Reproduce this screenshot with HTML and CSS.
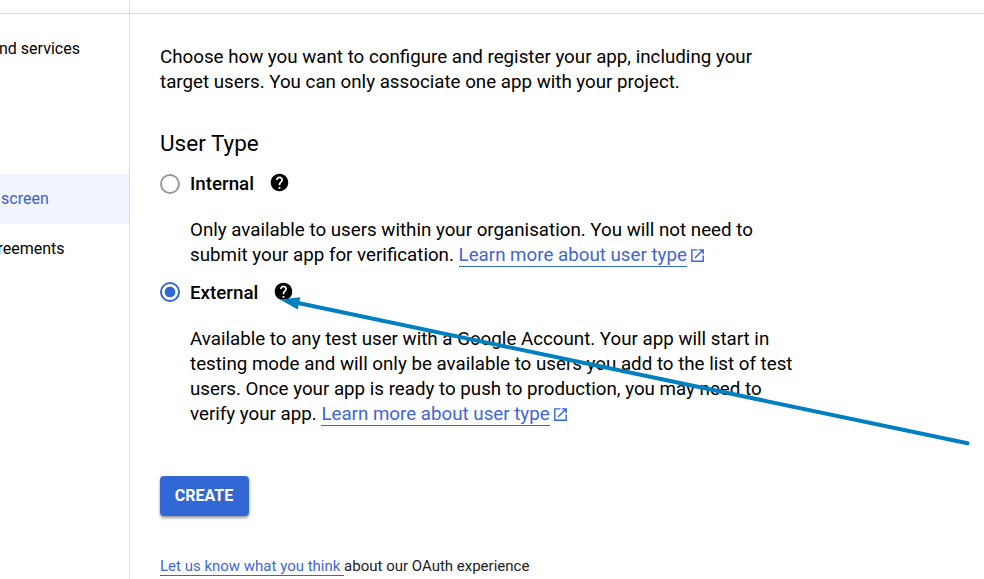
FILE: index.html
```html
<!DOCTYPE html>
<html lang="en">
<head>
<meta charset="utf-8">
<title>OAuth consent screen</title>
<link rel="stylesheet" href="styles.css">
</head>
<body>
<div class="topbar"></div>
<div class="layout">
  <nav class="sidebar">
    <div class="item"><span class="services">nd services</span></div>
    <div class="item active"><span class="screen">screen</span></div>
    <div class="item"><span class="agreements">reements</span></div>
  </nav>
  <main class="content">
    <p class="intro">Choose how you want to configure and register your app, including your<br>target users. You can only associate one app with your project.</p>
    <h2>User Type</h2>
    <div class="option"><span class="radio"></span><b>Internal</b>
      <svg class="help" viewBox="0 0 24 24"><path d="M12 2C6.480 2 2 6.480 2 12s4.480 10 10 10 10-4.480 10-10S17.520 2 12 2zm1 17h-2v-2h2v2zm2.070-7.750l-.9.920C13.450 12.900 13 13.500 13 15h-2v-.5c0-1.100.45-2.100 1.170-2.830l1.240-1.260c.37-.36.59-.86.59-1.410 0-1.100-.9-2-2-2s-2 .9-2 2H8c0-2.210 1.790-4 4-4s4 1.790 4 4c0 .88-.36 1.680-.93 2.250z"/></svg></div>
    <p class="desc first">Only available to users within your organisation. You will not need to<br>submit your app for verification. <a>Learn more about user type</a><svg class="ext" viewBox="0 0 24 24"><path d="M19 19H5V5h7V3H3v18h18v-9h-2zM14 3v2h3.590l-9.830 9.830 1.410 1.410L19 6.410V10h2V3z"/></svg></p>
    <div class="option external"><span class="radio on"></span><b>External</b>
      <svg class="help" viewBox="0 0 24 24"><path d="M12 2C6.480 2 2 6.480 2 12s4.480 10 10 10 10-4.480 10-10S17.520 2 12 2zm1 17h-2v-2h2v2zm2.070-7.750l-.9.920C13.450 12.900 13 13.500 13 15h-2v-.5c0-1.100.45-2.100 1.170-2.830l1.240-1.260c.37-.36.59-.86.59-1.410 0-1.100-.9-2-2-2s-2 .9-2 2H8c0-2.210 1.790-4 4-4s4 1.790 4 4c0 .88-.36 1.680-.93 2.250z"/></svg></div>
    <p class="desc second">Available to any test user with a Google Account. Your app will start in<br>testing mode and will only be available to users you add to the list of test<br>users. Once your app is ready to push to production, you may need to<br>verify your app. <a>Learn more about user type</a><svg class="ext" viewBox="0 0 24 24"><path d="M19 19H5V5h7V3H3v18h18v-9h-2zM14 3v2h3.590l-9.830 9.830 1.410 1.410L19 6.410V10h2V3z"/></svg></p>
    <button>CREATE</button>
    <p class="feedback"><a>Let us know what you think </a><span>about our OAuth experience</span></p>
  </main>
</div>
<svg class="arrow" viewBox="0 0 984 579"><path class="shaft" d="M297 302.800L967.500 443.300"/><path class="head" d="M280 299.500L300.300 297.300L297.700 309.500Z"/></svg>
</body>
</html>
```
FILE: styles.css
```css
* { box-sizing: border-box; }
body { margin: 0; width: 984px; height: 579px; overflow: hidden; position: relative; background: #fff; color: #000; font-family: Roboto, sans-serif; }
p, h2 { margin: 0; }
.topbar { height: 14px; border-bottom: 1px solid #dcdcdc; }
.topbar::after { content: ""; display: block; width: 129px; height: 13px; border-right: 1px solid #dcdcdc; }
.layout { display: flex; height: 565px; }
.sidebar { width: 130px; border-right: 1px solid #dcdcdc; padding-top: 10px; font-size: 16px; }
.item { height: 50px; line-height: 49px; white-space: nowrap; }
.services { margin-left: -1px; }
.screen { margin-left: 1px; }
.agreements { margin-left: -2.500px; }
.active { margin-top: 100px; background: #f0f5ff; color: #3f5dcf; }
.content { flex: 1; padding: 31px 0 0 30px; }
.intro, .desc { font-size: 18.740px; line-height: 25px; white-space: nowrap; }
h2 { margin-top: 32px; font-size: 22.500px; font-weight: 400; line-height: 32px; }
.option { display: flex; align-items: center; height: 24px; margin-top: 13px; font-size: 18.750px; }
.option.external { margin-top: 12px; }
.option b { margin-left: 10px; font-weight: 500; }
.external b { padding-top: 2px; }
.radio { width: 20px; height: 20px; border: 2px solid #999; border-radius: 50%; }
.on { border-color: #3367d6; background: radial-gradient(circle, #3367d6 5px, #fff 5.700px); }
.help { width: 21px; height: 21px; margin: 0 0 3px 14.500px; }
.external .help { margin-bottom: 2px; }
.desc { margin: 22px 0 0 30px; }
.desc.second { margin-top: 23px; }
a { color: #3f66d4; border-bottom: 1px solid #3367d6; }
.ext { width: 17px; height: 17px; margin-left: 2.300px; vertical-align: -2.500px; fill: #3367d6; }
button { display: block; width: 89px; height: 40px; margin-top: 49px; padding: 0 1px 2px 0; border: 0; border-radius: 4px; background: #3367d6; color: #fff; box-shadow: 0 2px 3px #0006; font: 700 16px Roboto, sans-serif; }
.feedback { margin-top: 40px; font-size: 15px; line-height: 20px; white-space: pre; }
.feedback span { color: #202124; }
.arrow { position: absolute; inset: 0; width: 984px; height: 579px; }
.shaft { stroke: #007fc1; stroke-width: 4; stroke-linecap: round; }
.head { fill: #007fc1; }
```
